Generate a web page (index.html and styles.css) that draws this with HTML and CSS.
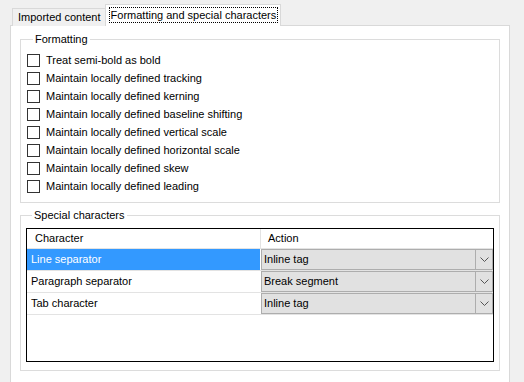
FILE: index.html
```html
<!DOCTYPE html>
<html lang="en">
<head>
  <meta charset="UTF-8">
  <title>Formatting and special characters</title>
  <link rel="stylesheet" href="styles.css">
</head>
<body>
  <div class="window">
    <div class="tabstrip">
      <div class="tab">Imported content</div>
      <div class="tab tab-active"><span class="focus">Formatting and special characters</span></div>
    </div>

    <div class="panel">
      <fieldset class="group">
        <legend>Formatting</legend>
        <label class="check"><span class="box"></span>Treat semi-bold as bold</label>
        <label class="check"><span class="box"></span>Maintain locally defined tracking</label>
        <label class="check"><span class="box"></span>Maintain locally defined kerning</label>
        <label class="check"><span class="box"></span>Maintain locally defined baseline shifting</label>
        <label class="check"><span class="box"></span>Maintain locally defined vertical scale</label>
        <label class="check"><span class="box"></span>Maintain locally defined horizontal scale</label>
        <label class="check"><span class="box"></span>Maintain locally defined skew</label>
        <label class="check"><span class="box"></span>Maintain locally defined leading</label>
      </fieldset>

      <fieldset class="group group-special">
        <legend>Special characters</legend>
        <div class="grid">
          <div class="grid-head">
            <div class="cell-name">Character</div>
            <div class="cell-action">Action</div>
          </div>
          <div class="grid-row selected">
            <div class="cell-name">Line separator</div>
            <div class="combo"><span>Inline tag</span><span class="drop"><svg width="9" height="5" viewBox="0 0 9 5"><path d="M0.5 0.5 L4.5 4.5 L8.5 0.5" fill="none" stroke="#555" stroke-width="1"/></svg></span></div>
          </div>
          <div class="grid-row">
            <div class="cell-name">Paragraph separator</div>
            <div class="combo"><span>Break segment</span><span class="drop"><svg width="9" height="5" viewBox="0 0 9 5"><path d="M0.5 0.5 L4.5 4.5 L8.5 0.5" fill="none" stroke="#555" stroke-width="1"/></svg></span></div>
          </div>
          <div class="grid-row">
            <div class="cell-name">Tab character</div>
            <div class="combo"><span>Inline tag</span><span class="drop"><svg width="9" height="5" viewBox="0 0 9 5"><path d="M0.5 0.5 L4.5 4.5 L8.5 0.5" fill="none" stroke="#555" stroke-width="1"/></svg></span></div>
          </div>
        </div>
      </fieldset>
    </div>
  </div>
</body>
</html>
```

FILE: styles.css
```css
body {
  margin: 0;
  background-color: #F0F0F0;
  font-family: 'Liberation Sans', Arial, sans-serif;
  font-size: 11px;
  color: #000;
  overflow: hidden;
}
.window {
  padding: 4px 0 0 10px;
  width: 500px;
}
.tabstrip {
  display: flex;
  align-items: flex-end;
  padding-left: 2px;
  height: 21px;
  position: relative;
  z-index: 1;
}
.tab {
  height: 17px;
  line-height: 17px;
  padding: 0 4px 0 5px;
  border: 1px solid #D9D9D9;
  border-bottom: none;
  border-right: none;
  background-color: #F0F0F0;
  margin-bottom: -1px;
}
.tab-active {
  height: 21px;
  line-height: 21px;
  padding: 0 3px 0 4px;
  background-color: #FFF;
  border-right: 1px solid #D9D9D9;
  margin-bottom: -1px;
}
.focus {
  display: inline-block;
  line-height: 14px;
  outline: 1px dotted #000;
  padding: 0 1px;
}
.panel {
  background-color: #FFF;
  border: 1px solid #D9D9D9;
  height: 380px;
  padding: 6px 9px 0 9px;
}
.group {
  margin: 0;
  border: 1px solid #DCDCDC;
  padding: 5px 6px 7px 6px;
}
.group legend {
  padding: 0 2px;
  margin-left: 6px;
  line-height: 14px;
}
.check {
  display: flex;
  align-items: center;
  height: 18px;
}
.box {
  width: 11px;
  height: 11px;
  border: 1px solid #333;
  background-color: #FFF;
  margin-right: 6px;
}
.group-special {
  margin-top: 5px;
  padding: 6px 5px 8px 5px;
}
.grid {
  border: 1px solid #000;
  height: 132px;
}
.grid-head {
  display: flex;
  height: 19px;
  line-height: 19px;
  border-bottom: 1px solid #E3E3E3;
}
.grid-head .cell-name {
  width: 225px;
  padding-left: 8px;
  border-right: 1px solid #E3E3E3;
}
.grid-head .cell-action {
  padding-left: 7px;
}
.grid-row {
  display: flex;
  height: 21px;
  border-bottom: 1px solid #E3E3E3;
}
.grid-row .cell-name {
  width: 229px;
  padding-left: 4px;
  line-height: 21px;
}
.grid-row.selected .cell-name {
  background-color: #3399FF;
  color: #FFF;
}
.combo {
  flex: 1;
  display: flex;
  justify-content: space-between;
  margin-left: 1px;
  background-color: #E1E1E1;
  border: 1px solid #ADADAD;
  line-height: 19px;
  padding-left: 2px;
}
.drop {
  width: 16px;
  border-left: 1px solid #ADADAD;
  display: flex;
  align-items: center;
  justify-content: center;
}
```
